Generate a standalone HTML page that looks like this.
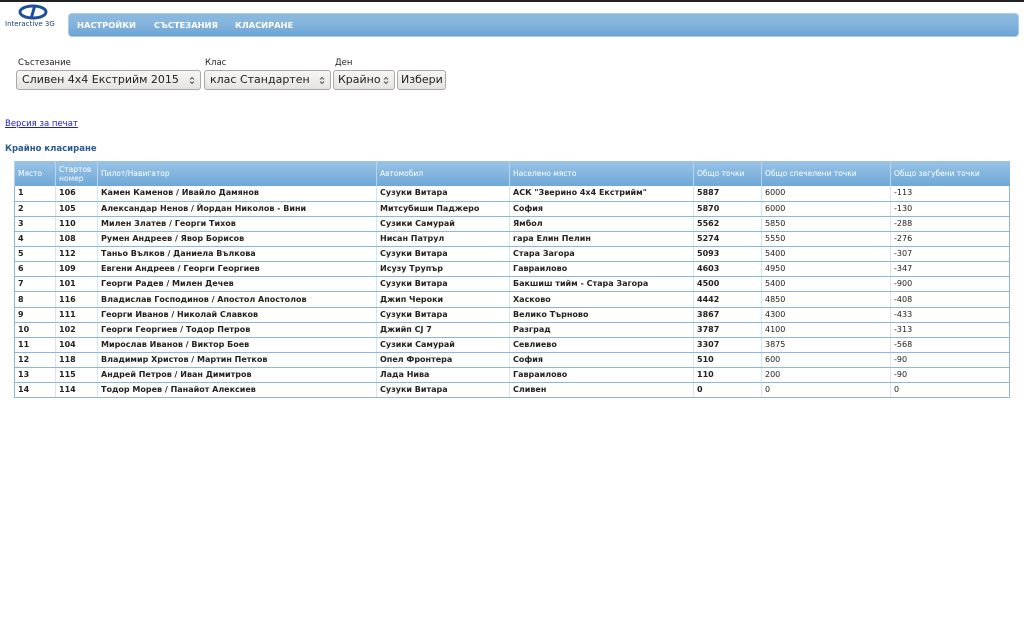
<!DOCTYPE html>
<html><head><meta charset="utf-8"><style>
body{margin:0;width:1024px;height:640px;background:#fff;font-family:"DejaVu Sans","Liberation Sans",sans-serif;position:relative;overflow:hidden}
.topline{position:absolute;left:0;top:0;width:1024px;height:2px;background:#222}
.logo{position:absolute;left:5px;top:3px;width:55px;height:26px}
.nav{position:absolute;left:68px;top:13px;width:951px;height:24px;border-radius:4px;background:linear-gradient(#8cbae0,#84b3dc 50%,#6aa3d2);border:1px solid #a8cbe8;box-sizing:border-box}
.nav span{position:absolute;top:6px;color:#fff;font-weight:bold;font-size:8.3px}
.lbl{position:absolute;top:58px;font-size:8.5px;color:#222}
.sel{position:absolute;top:70px;height:20px;box-sizing:border-box;border:1px solid #a9a9a9;border-radius:3px;background:linear-gradient(#f7f6f4,#e5e3df);font-size:11px;line-height:15px;color:#222;padding:1px 5px;white-space:nowrap;overflow:hidden}
.sel svg{position:absolute;right:5px;top:5px}
a.pr{position:absolute;left:5px;top:119px;font-size:8.5px;color:#1a1aee}
.h{position:absolute;left:5px;top:144px;font-size:8.5px;font-weight:bold;color:#2a5a90}
table{position:absolute;left:14px;top:161px;border-collapse:collapse;table-layout:fixed;width:995px}
th{height:25px;background:linear-gradient(#9ac4e6,#6ea8d8);color:#fff;font-weight:normal;font-size:7.5px;text-align:left;padding:0 3px;border-left:1px solid #b8d4ec;line-height:9px}
tr.r{height:15.15px}
td{font-size:8px;font-weight:bold;color:#222;padding:0 3px;border-bottom:1px solid #8db7dc;border-left:1px solid #d8e4ef;white-space:nowrap;overflow:hidden;line-height:12px}
td.n{font-weight:normal}
tr td:first-child{border-left:1px solid #8db7dc}
tr td:last-child{border-right:1px solid #8db7dc}
</style></head><body>
<div class="topline"></div>
<svg class="logo" viewBox="0 0 55 26"><ellipse cx="28" cy="9" rx="13" ry="6" fill="none" stroke="#1f4f9a" stroke-width="3"/><path d="M30 2 L26 16" stroke="#1f4f9a" stroke-width="3"/><text x="0" y="23" font-size="7" font-family="DejaVu Sans" fill="#1f3f7a">Interactive 3G</text></svg>
<div class="nav"><span style="left:8px">НАСТРОЙКИ</span><span style="left:85px">СЪСТЕЗАНИЯ</span><span style="left:166px">КЛАСИРАНЕ</span></div>
<div class="lbl" style="left:18px">Състезание</div><div class="lbl" style="left:205px">Клас</div><div class="lbl" style="left:335px">Ден</div>
<div class="sel" style="left:16px;width:185px">Сливен 4x4 Екстрийм 2015<svg width="6" height="9"><path d="M1 3.5 L3 1.5 L5 3.5 M1 5.5 L3 7.5 L5 5.5" fill="none" stroke="#555" stroke-width="1"/></svg></div>
<div class="sel" style="left:204px;width:127px">клас Стандартен<svg width="6" height="9"><path d="M1 3.5 L3 1.5 L5 3.5 M1 5.5 L3 7.5 L5 5.5" fill="none" stroke="#555" stroke-width="1"/></svg></div>
<div class="sel" style="left:333px;width:62px;padding-left:4px">Крайно<svg width="6" height="9"><path d="M1 3.5 L3 1.5 L5 3.5 M1 5.5 L3 7.5 L5 5.5" fill="none" stroke="#555" stroke-width="1"/></svg></div>
<div class="sel" style="left:397px;width:49px;padding:1px 3px">Избери</div>
<a class="pr" href="#">Версия за печат</a>
<div class="h">Крайно класиране</div>
<table>
<colgroup><col style="width:41px"><col style="width:42px"><col style="width:279px"><col style="width:133px"><col style="width:184px"><col style="width:68px"><col style="width:129px"><col style="width:119px"></colgroup>
<tr><th>Място</th><th>Стартов<br>номер</th><th>Пилот/Навигатор</th><th>Автомобил</th><th>Населено място</th><th>Общо точки</th><th>Общо спечелени точки</th><th>Общо загубени точки</th></tr>
<tr class="r"><td>1</td><td>106</td><td>Камен Каменов / Ивайло Дамянов</td><td>Сузуки Витара</td><td>АСК "Зверино 4x4 Екстрийм"</td><td>5887</td><td class="n">6000</td><td class="n">-113</td></tr>
<tr class="r"><td>2</td><td>105</td><td>Александар Ненов / Йордан Николов - Вини</td><td>Митсубиши Паджеро</td><td>София</td><td>5870</td><td class="n">6000</td><td class="n">-130</td></tr>
<tr class="r"><td>3</td><td>110</td><td>Милен Златев / Георги Тихов</td><td>Сузики Самурай</td><td>Ямбол</td><td>5562</td><td class="n">5850</td><td class="n">-288</td></tr>
<tr class="r"><td>4</td><td>108</td><td>Румен Андреев / Явор Борисов</td><td>Нисан Патрул</td><td>гара Елин Пелин</td><td>5274</td><td class="n">5550</td><td class="n">-276</td></tr>
<tr class="r"><td>5</td><td>112</td><td>Таньо Вълков / Даниела Вълкова</td><td>Сузуки Витара</td><td>Стара Загора</td><td>5093</td><td class="n">5400</td><td class="n">-307</td></tr>
<tr class="r"><td>6</td><td>109</td><td>Евгени Андреев / Георги Георгиев</td><td>Исузу Трупър</td><td>Гавраилово</td><td>4603</td><td class="n">4950</td><td class="n">-347</td></tr>
<tr class="r"><td>7</td><td>101</td><td>Георги Радев / Милен Дечев</td><td>Сузуки Витара</td><td>Бакшиш тийм - Стара Загора</td><td>4500</td><td class="n">5400</td><td class="n">-900</td></tr>
<tr class="r"><td>8</td><td>116</td><td>Владислав Господинов / Апостол Апостолов</td><td>Джип Чероки</td><td>Хасково</td><td>4442</td><td class="n">4850</td><td class="n">-408</td></tr>
<tr class="r"><td>9</td><td>111</td><td>Георги Иванов / Николай Славков</td><td>Сузуки Витара</td><td>Велико Търново</td><td>3867</td><td class="n">4300</td><td class="n">-433</td></tr>
<tr class="r"><td>10</td><td>102</td><td>Георги Георгиев / Тодор Петров</td><td>Джийп CJ 7</td><td>Разград</td><td>3787</td><td class="n">4100</td><td class="n">-313</td></tr>
<tr class="r"><td>11</td><td>104</td><td>Мирослав Иванов / Виктор Боев</td><td>Сузики Самурай</td><td>Севлиево</td><td>3307</td><td class="n">3875</td><td class="n">-568</td></tr>
<tr class="r"><td>12</td><td>118</td><td>Владимир Христов / Мартин Петков</td><td>Опел Фронтера</td><td>София</td><td>510</td><td class="n">600</td><td class="n">-90</td></tr>
<tr class="r"><td>13</td><td>115</td><td>Андрей Петров / Иван Димитров</td><td>Лада Нива</td><td>Гавраилово</td><td>110</td><td class="n">200</td><td class="n">-90</td></tr>
<tr class="r"><td>14</td><td>114</td><td>Тодор Морев / Панайот Алексиев</td><td>Сузуки Витара</td><td>Сливен</td><td>0</td><td class="n">0</td><td class="n">0</td></tr>
</table>
</body></html>
